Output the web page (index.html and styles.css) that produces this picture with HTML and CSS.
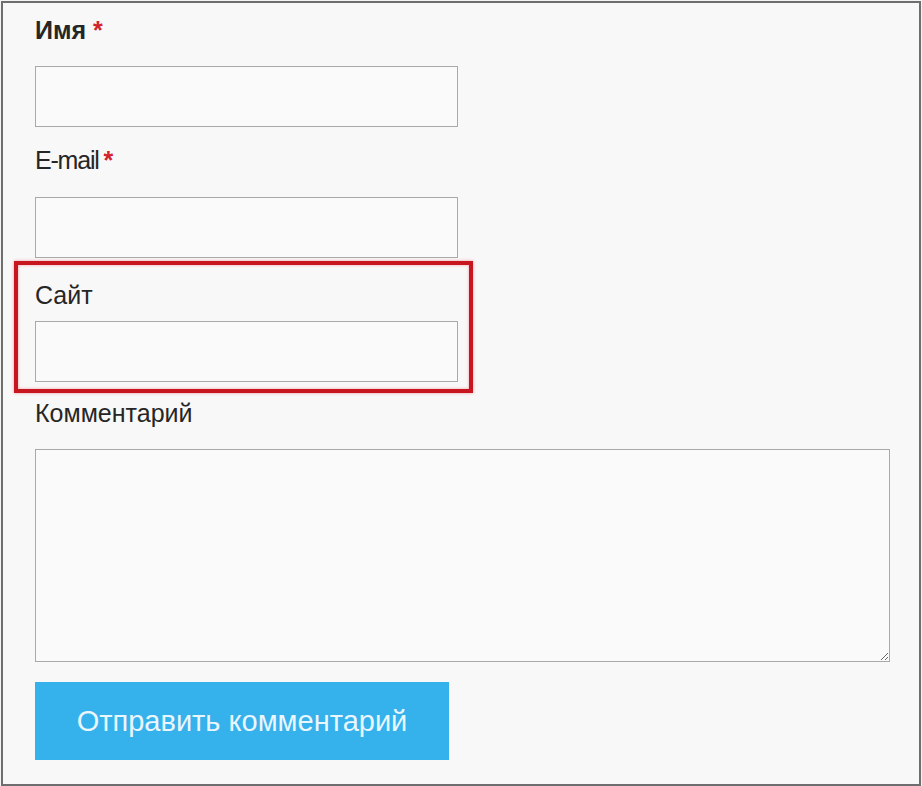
FILE: index.html
```html
<!DOCTYPE html>
<html lang="ru">
<head>
<meta charset="utf-8">
<title>Комментарий</title>
<link rel="stylesheet" href="styles.css">
</head>
<body>
<div class="frame">
  <form class="form">
    <div class="field field-name">
      <label class="label label-strong">Имя <span class="req">*</span></label>
      <input class="input" type="text">
    </div>
    <div class="field field-email">
      <label class="label label-tight">E-mail <span class="req">*</span></label>
      <input class="input" type="text">
    </div>
    <div class="highlight">
      <label class="label">Сайт</label>
      <input class="input input-site" type="text">
    </div>
    <div class="field field-comment">
      <label class="label">Комментарий</label>
      <textarea class="textarea"></textarea>
    </div>
    <button class="submit" type="button">Отправить комментарий</button>
  </form>
</div>
</body>
</html>
```

FILE: styles.css
```css
html, body {
  margin: 0;
  padding: 0;
  background: #f4f4f4;
}
body {
  width: 922px;
  height: 786px;
  overflow: hidden;
}
.frame {
  box-sizing: border-box;
  margin: 1px 0 0 1px;
  width: 920px;
  height: 785px;
  border: 2px solid #6e6e6e;
  background: #f8f8f8;
  font-family: "Liberation Sans", Arial, sans-serif;
  color: #262626;
}
.form {
  display: flex;
  flex-direction: column;
  align-items: flex-start;
  padding: 12px 0 0 32px;
}
.field {
  display: flex;
  flex-direction: column;
  align-items: flex-start;
}
.label {
  display: block;
  font-size: 25px;
  line-height: 30px;
  margin-bottom: 21px;
}
.label-strong {
  font-weight: bold;
}
.label-tight {
  letter-spacing: -1.2px;
  word-spacing: -1px;
}
.req {
  color: #d2232c;
  font-weight: bold;
}
.field-email {
  margin-top: 18px;
}
.field-email .label {
  margin-bottom: 22px;
}
.input {
  box-sizing: border-box;
  display: block;
  width: 423px;
  height: 61px;
  margin: 0;
  border: 1px solid #a9a9a9;
  background: #fafafa;
  font: inherit;
}
.highlight {
  box-sizing: border-box;
  display: flex;
  flex-direction: column;
  align-items: flex-start;
  margin: 3px 0 0 -21px;
  width: 459px;
  padding: 15px 11px 7px 17px;
  border: 4px solid #c7161f;
  box-shadow: 0 0 3px rgba(230, 40, 50, 0.45), inset 0 0 3px rgba(230, 40, 50, 0.45);
}
.highlight .label {
  margin-bottom: 11px;
}
.field-comment {
  margin-top: 5px;
}
.textarea {
  box-sizing: border-box;
  display: block;
  width: 855px;
  height: 213px;
  margin: 0;
  border: 1px solid #a9a9a9;
  background: #fafafa;
  font: inherit;
}
.submit {
  box-sizing: border-box;
  margin-top: 20px;
  width: 414px;
  height: 78px;
  border: 0;
  padding: 0;
  background: #35b1ec;
  color: #e9f6fd;
  font-family: "Liberation Sans", Arial, sans-serif;
  font-size: 29px;
  line-height: 78px;
  text-align: center;
}
```
